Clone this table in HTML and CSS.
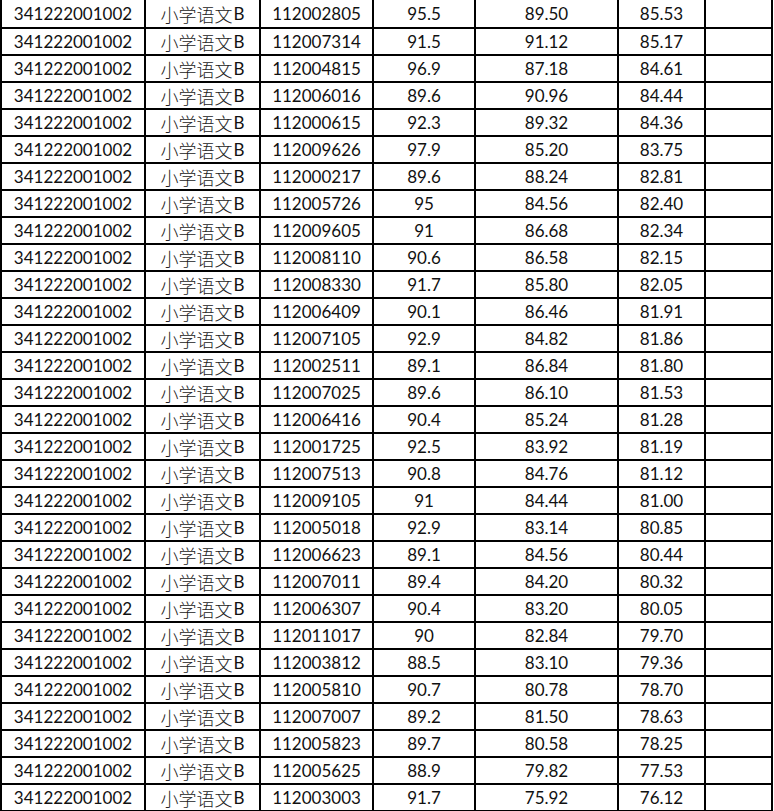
FILE: index.html
```html
<!DOCTYPE html>
<html lang="zh">
<head>
<meta charset="utf-8">
<title>成绩表</title>
<link rel="stylesheet" href="styles.css">
</head>
<body>
<div class="sheet">
<div class="c">341222001002</div><div class="c"><span class="zh">小学语文</span>B</div><div class="c">112002805</div><div class="c">95.5</div><div class="c">89.50</div><div class="c">85.53</div><div class="c"></div>
<div class="c">341222001002</div><div class="c"><span class="zh">小学语文</span>B</div><div class="c">112007314</div><div class="c">91.5</div><div class="c">91.12</div><div class="c">85.17</div><div class="c"></div>
<div class="c">341222001002</div><div class="c"><span class="zh">小学语文</span>B</div><div class="c">112004815</div><div class="c">96.9</div><div class="c">87.18</div><div class="c">84.61</div><div class="c"></div>
<div class="c">341222001002</div><div class="c"><span class="zh">小学语文</span>B</div><div class="c">112006016</div><div class="c">89.6</div><div class="c">90.96</div><div class="c">84.44</div><div class="c"></div>
<div class="c">341222001002</div><div class="c"><span class="zh">小学语文</span>B</div><div class="c">112000615</div><div class="c">92.3</div><div class="c">89.32</div><div class="c">84.36</div><div class="c"></div>
<div class="c">341222001002</div><div class="c"><span class="zh">小学语文</span>B</div><div class="c">112009626</div><div class="c">97.9</div><div class="c">85.20</div><div class="c">83.75</div><div class="c"></div>
<div class="c">341222001002</div><div class="c"><span class="zh">小学语文</span>B</div><div class="c">112000217</div><div class="c">89.6</div><div class="c">88.24</div><div class="c">82.81</div><div class="c"></div>
<div class="c">341222001002</div><div class="c"><span class="zh">小学语文</span>B</div><div class="c">112005726</div><div class="c">95</div><div class="c">84.56</div><div class="c">82.40</div><div class="c"></div>
<div class="c">341222001002</div><div class="c"><span class="zh">小学语文</span>B</div><div class="c">112009605</div><div class="c">91</div><div class="c">86.68</div><div class="c">82.34</div><div class="c"></div>
<div class="c">341222001002</div><div class="c"><span class="zh">小学语文</span>B</div><div class="c">112008110</div><div class="c">90.6</div><div class="c">86.58</div><div class="c">82.15</div><div class="c"></div>
<div class="c">341222001002</div><div class="c"><span class="zh">小学语文</span>B</div><div class="c">112008330</div><div class="c">91.7</div><div class="c">85.80</div><div class="c">82.05</div><div class="c"></div>
<div class="c">341222001002</div><div class="c"><span class="zh">小学语文</span>B</div><div class="c">112006409</div><div class="c">90.1</div><div class="c">86.46</div><div class="c">81.91</div><div class="c"></div>
<div class="c">341222001002</div><div class="c"><span class="zh">小学语文</span>B</div><div class="c">112007105</div><div class="c">92.9</div><div class="c">84.82</div><div class="c">81.86</div><div class="c"></div>
<div class="c">341222001002</div><div class="c"><span class="zh">小学语文</span>B</div><div class="c">112002511</div><div class="c">89.1</div><div class="c">86.84</div><div class="c">81.80</div><div class="c"></div>
<div class="c">341222001002</div><div class="c"><span class="zh">小学语文</span>B</div><div class="c">112007025</div><div class="c">89.6</div><div class="c">86.10</div><div class="c">81.53</div><div class="c"></div>
<div class="c">341222001002</div><div class="c"><span class="zh">小学语文</span>B</div><div class="c">112006416</div><div class="c">90.4</div><div class="c">85.24</div><div class="c">81.28</div><div class="c"></div>
<div class="c">341222001002</div><div class="c"><span class="zh">小学语文</span>B</div><div class="c">112001725</div><div class="c">92.5</div><div class="c">83.92</div><div class="c">81.19</div><div class="c"></div>
<div class="c">341222001002</div><div class="c"><span class="zh">小学语文</span>B</div><div class="c">112007513</div><div class="c">90.8</div><div class="c">84.76</div><div class="c">81.12</div><div class="c"></div>
<div class="c">341222001002</div><div class="c"><span class="zh">小学语文</span>B</div><div class="c">112009105</div><div class="c">91</div><div class="c">84.44</div><div class="c">81.00</div><div class="c"></div>
<div class="c">341222001002</div><div class="c"><span class="zh">小学语文</span>B</div><div class="c">112005018</div><div class="c">92.9</div><div class="c">83.14</div><div class="c">80.85</div><div class="c"></div>
<div class="c">341222001002</div><div class="c"><span class="zh">小学语文</span>B</div><div class="c">112006623</div><div class="c">89.1</div><div class="c">84.56</div><div class="c">80.44</div><div class="c"></div>
<div class="c">341222001002</div><div class="c"><span class="zh">小学语文</span>B</div><div class="c">112007011</div><div class="c">89.4</div><div class="c">84.20</div><div class="c">80.32</div><div class="c"></div>
<div class="c">341222001002</div><div class="c"><span class="zh">小学语文</span>B</div><div class="c">112006307</div><div class="c">90.4</div><div class="c">83.20</div><div class="c">80.05</div><div class="c"></div>
<div class="c">341222001002</div><div class="c"><span class="zh">小学语文</span>B</div><div class="c">112011017</div><div class="c">90</div><div class="c">82.84</div><div class="c">79.70</div><div class="c"></div>
<div class="c">341222001002</div><div class="c"><span class="zh">小学语文</span>B</div><div class="c">112003812</div><div class="c">88.5</div><div class="c">83.10</div><div class="c">79.36</div><div class="c"></div>
<div class="c">341222001002</div><div class="c"><span class="zh">小学语文</span>B</div><div class="c">112005810</div><div class="c">90.7</div><div class="c">80.78</div><div class="c">78.70</div><div class="c"></div>
<div class="c">341222001002</div><div class="c"><span class="zh">小学语文</span>B</div><div class="c">112007007</div><div class="c">89.2</div><div class="c">81.50</div><div class="c">78.63</div><div class="c"></div>
<div class="c">341222001002</div><div class="c"><span class="zh">小学语文</span>B</div><div class="c">112005823</div><div class="c">89.7</div><div class="c">80.58</div><div class="c">78.25</div><div class="c"></div>
<div class="c">341222001002</div><div class="c"><span class="zh">小学语文</span>B</div><div class="c">112005625</div><div class="c">88.9</div><div class="c">79.82</div><div class="c">77.53</div><div class="c"></div>
<div class="c">341222001002</div><div class="c"><span class="zh">小学语文</span>B</div><div class="c">112003003</div><div class="c">91.7</div><div class="c">75.92</div><div class="c">76.12</div><div class="c"></div>
</div>
</body>
</html>
```
FILE: styles.css
```css
html, body {
  margin: 0;
  padding: 0;
  background: #ffffff;
  overflow: hidden;
}

.sheet {
  display: grid;
  grid-template-columns: 142px 113px 111px 100px 141px 85px 65px;
  grid-template-rows: 27px repeat(29, 25px);
  gap: 2px;
  padding: 0 2px 2px 2px;
  width: max-content;
  background: #000000;
  font-family: Lato, "Open Sans", "Noto Sans CJK SC", sans-serif;
  font-size: 17px;
  color: #111111;
}

.c {
  background: #ffffff;
  display: flex;
  align-items: center;
  justify-content: center;
  white-space: nowrap;
  line-height: 1;
}

.zh {
  font-family: "Noto Sans CJK SC", sans-serif;
  font-size: 18px;
  font-weight: 300;
  margin-right: 1px;
  color: #222222;
}
```
